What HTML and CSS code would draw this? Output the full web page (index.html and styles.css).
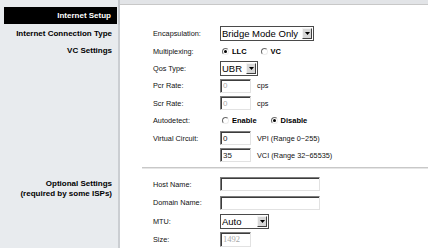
FILE: index.html
```html
<!DOCTYPE html>
<html>
<head>
<meta charset="utf-8">
<link rel="stylesheet" href="styles.css">
</head>
<body>
<div class="page">
  <div class="side side-head"><div class="title">Internet Setup</div></div>
  <div class="main-head"></div>

  <div class="side"><span class="sec">Internet Connection Type</span></div>
  <div class="lbl">Encapsulation:</div>
  <div class="ctl">
    <span class="sel w-bridge"><select><option>Bridge Mode Only</option></select><span class="arrow"><svg width="5" height="3" viewBox="0 0 5 3"><path d="M0 0h5L2.5 3z" fill="#000"/></svg></span></span>
  </div>

  <div class="side side-vc"><span class="sec">VC Settings</span></div>
  <div class="lbl">Multiplexing:</div>
  <div class="ctl">
    <span class="radio on"></span><b class="rl">LLC</b>
    <span class="radio gap"></span><b class="rl">VC</b>
  </div>

  <div class="lbl">Qos Type:</div>
  <div class="ctl">
    <span class="sel w-ubr"><select><option>UBR</option></select><span class="arrow"><svg width="5" height="3" viewBox="0 0 5 3"><path d="M0 0h5L2.5 3z" fill="#000"/></svg></span></span>
  </div>

  <div class="lbl">Pcr Rate:</div>
  <div class="ctl"><input class="txt w-s dis" value="0" disabled><span class="note">cps</span></div>

  <div class="lbl">Scr Rate:</div>
  <div class="ctl"><input class="txt w-s dis" value="0" disabled><span class="note">cps</span></div>

  <div class="lbl">Autodetect:</div>
  <div class="ctl">
    <span class="radio"></span><b class="rl">Enable</b>
    <span class="radio on gap"></span><b class="rl">Disable</b>
  </div>

  <div class="lbl">Virtual Circuit:</div>
  <div class="ctl"><input class="txt w-s" value="0"><span class="note">VPI (Range 0~255)</span></div>

  <div class="lbl"></div>
  <div class="ctl"><input class="txt w-s" value="35"><span class="note">VCI (Range 32~65535)</span></div>

  <div class="sep"><div class="line"></div></div>

  <div class="side side-opt"><span class="sec">Optional Settings<br>(required by some ISPs)</span></div>
  <div class="lbl">Host Name:</div>
  <div class="ctl"><input class="txt w-l" value=""></div>

  <div class="lbl">Domain Name:</div>
  <div class="ctl"><input class="txt w-l" value=""></div>

  <div class="lbl">MTU:</div>
  <div class="ctl">
    <span class="sel w-auto"><select><option>Auto</option></select><span class="arrow"><svg width="5" height="3" viewBox="0 0 5 3"><path d="M0 0h5L2.5 3z" fill="#000"/></svg></span></span>
  </div>

  <div class="lbl">Size:</div>
  <div class="ctl"><input class="txt w-s dis size" value="1492" disabled></div>
</div>
</body>
</html>
```
FILE: styles.css
```css
html, body {
  margin: 0;
  padding: 0;
  overflow: hidden;
  height: 248px;
}
body {
  background: #e2e4e7;
  font-family: "Liberation Sans", Arial, sans-serif;
  color: #000;
}
.page {
  display: grid;
  grid-template-columns: 120px 100px 1fr;
  grid-template-rows: 25px repeat(8, 17.4px) 11px repeat(3, 18.5px) 17px;
}
.side {
  background: #e8ebee;
  border-right: 2px solid #cbced2;
  box-sizing: border-box;
  text-align: right;
  padding-right: 6px;
  font-size: 8px;
  font-weight: bold;
  display: flex;
  justify-content: flex-end;
  align-items: flex-start;
  line-height: 17.4px;
}
.side-head {
  padding: 7px 1px 1px 4px;
  display: block;
  border-right-color: #c4c7cb;
}
.title {
  background: #000;
  color: #fff;
  height: 17px;
  line-height: 17px;
  text-align: right;
  padding-right: 6px;
  font-size: 8px;
  font-weight: bold;
}
.main-head {
  grid-column: 2 / 4;
  margin-top: 4px;
  background: #fff;
  border-top: 1px solid #c8c8c8;
}
.side-vc {
  grid-row: 3 / 11;
}
.side-opt {
  grid-row: 11 / 15;
  line-height: 10px;
  padding-top: 4px;
}
.lbl {
  background: #fff;
  padding-left: 33px;
  font-size: 7.3px;
  display: flex;
  align-items: center;
  white-space: nowrap;
  color: #111;
}
.ctl {
  background: #fff;
  display: flex;
  align-items: center;
  white-space: nowrap;
}
.sep {
  grid-column: 2 / 4;
  background: #fff;
  padding-top: 3px;
  padding-left: 22px;
}
.line {
  height: 1px;
  background: #c8c8c8;
  border-bottom: 1px solid #e6e6e6;
}
.sel {
  position: relative;
  display: inline-flex;
  height: 15px;
  box-sizing: border-box;
  border: 1px solid #4a4a4a;
  background: #fff;
}
.sel select {
  appearance: none;
  -webkit-appearance: none;
  display: block;
  box-sizing: border-box;
  border: 0;
  margin: 0;
  padding: 0 0 0 1px;
  height: 13px;
  width: 100%;
  background: #fff;
  font-family: "Liberation Sans", Arial, sans-serif;
  font-size: 9.5px;
  line-height: 13px;
  color: #000;
  outline: none;
}
.arrow {
  position: absolute;
  top: 1px;
  right: 1px;
  width: 10px;
  height: 11px;
  box-sizing: border-box;
  background: #d8d8d8;
  border: 1px solid;
  border-color: #f4f4f4 #404040 #404040 #f4f4f4;
  display: flex;
  align-items: center;
  justify-content: center;
}
.w-bridge { width: 94px; }
.w-ubr { width: 38px; }
.w-auto { width: 49px; }
.radio {
  display: inline-block;
  width: 7px;
  height: 7px;
  box-sizing: border-box;
  border-radius: 50%;
  border: 1px solid;
  border-color: #6a6a6a #ececec #ececec #6a6a6a;
  background: #fff;
  margin-left: 2px;
  position: relative;
}
.radio.on::after {
  content: "";
  position: absolute;
  left: 1px;
  top: 1px;
  width: 3px;
  height: 3px;
  border-radius: 50%;
  background: #000;
}
.radio.gap { margin-left: 14px; }
.rl {
  font-size: 7.5px;
  margin-left: 3px;
}
.txt {
  box-sizing: border-box;
  height: 14px;
  margin: 0;
  padding: 0 2px;
  border: 1px solid;
  border-color: #7c7c7c #e2e2e2 #e2e2e2 #7c7c7c;
  box-shadow: inset 1px 1px 0 #3c3c3c;
  background: #fff;
  font-family: "Liberation Sans", Arial, sans-serif;
  font-size: 8px;
  color: #222;
  outline: none;
}
.txt.dis { color: #a8a8a8; }
.txt.size {
  height: 15px;
  font-family: "Liberation Serif", "Times New Roman", serif;
  font-size: 8.5px;
}
.w-s { width: 31px; }
.w-l { width: 100px; }
.note {
  font-size: 7.3px;
  margin-left: 6px;
  color: #111;
}
```
